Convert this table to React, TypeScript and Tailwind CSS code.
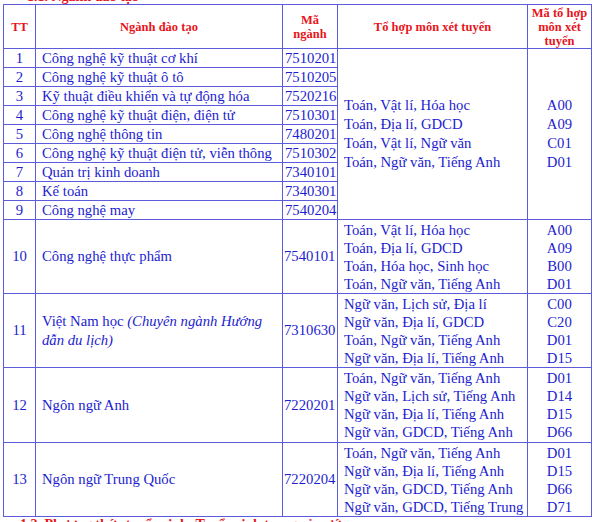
import React from "react";

const B = "border border-[#5b5bdb]";
const F = "font-['Liberation_Serif','Times_New_Roman',serif]";

const top9 = [
  ["1", "Công nghệ kỹ thuật cơ khí", "7510201"],
  ["2", "Công nghệ kỹ thuật ô tô", "7510205"],
  ["3", "Kỹ thuật điều khiển và tự động hóa", "7520216"],
  ["4", "Công nghệ kỹ thuật điện, điện tử", "7510301"],
  ["5", "Công nghệ thông tin", "7480201"],
  ["6", "Công nghệ kỹ thuật điện tử, viễn thông", "7510302"],
  ["7", "Quản trị kinh doanh", "7340101"],
  ["8", "Kế toán", "7340301"],
  ["9", "Công nghệ may", "7540204"],
];

const combo9: [string, string][] = [
  ["Toán, Vật lí, Hóa học", "A00"],
  ["Toán, Địa lí, GDCD", "A09"],
  ["Toán, Vật lí, Ngữ văn", "C01"],
  ["Toán, Ngữ văn, Tiếng Anh", "D01"],
];

type Big = {
  tt: string;
  name: React.ReactNode;
  code: string;
  combos: [string, string][];
  h: string;
};

const big: Big[] = [
  {
    tt: "10",
    name: "Công nghệ thực phẩm",
    code: "7540101",
    h: "h-[74px]",
    combos: [
      ["Toán, Vật lí, Hóa học", "A00"],
      ["Toán, Địa lí, GDCD", "A09"],
      ["Toán, Hóa học, Sinh học", "B00"],
      ["Toán, Ngữ văn, Tiếng Anh", "D01"],
    ],
  },
  {
    tt: "11",
    name: (
      <span className="block leading-[19px]">
        Việt Nam học <i>(Chuyên ngành Hướng</i>
        <br />
        <i>dẫn du lịch)</i>
      </span>
    ),
    code: "7310630",
    h: "h-[74px]",
    combos: [
      ["Ngữ văn, Lịch sử, Địa lí", "C00"],
      ["Ngữ văn, Địa lí, GDCD", "C20"],
      ["Toán, Ngữ văn, Tiếng Anh", "D01"],
      ["Ngữ văn, Địa lí, Tiếng Anh", "D15"],
    ],
  },
  {
    tt: "12",
    name: "Ngôn ngữ Anh",
    code: "7220201",
    h: "h-[75px]",
    combos: [
      ["Toán, Ngữ văn, Tiếng Anh", "D01"],
      ["Ngữ văn, Lịch sử, Tiếng Anh", "D14"],
      ["Ngữ văn, Địa lí, Tiếng Anh", "D15"],
      ["Ngữ văn, GDCD, Tiếng Anh", "D66"],
    ],
  },
  {
    tt: "13",
    name: "Ngôn ngữ Trung Quốc",
    code: "7220204",
    h: "h-[74px]",
    combos: [
      ["Toán, Ngữ văn, Tiếng Anh", "D01"],
      ["Ngữ văn, Địa lí, Tiếng Anh", "D15"],
      ["Ngữ văn, GDCD, Tiếng Anh", "D66"],
      ["Ngữ văn, GDCD, Tiếng Trung", "D71"],
    ],
  },
];

export default function App() {
  return (
    <div className={`w-[595px] h-[522px] overflow-hidden bg-white text-[#1c1cd0] ${F}`}>
      <div className="h-[4px] overflow-hidden relative">
        <div className={`absolute left-[27px] top-[-10px] text-[14px] leading-[14px] font-bold text-[#e8141b] whitespace-nowrap ${F}`}>
          1.1. Ngành đào tạo
        </div>
      </div>
      <div className="pl-[3px]">
        <table className={`table-fixed border-collapse w-[588px] text-[14.7px] text-[#1c1cd0] ${F}`}>
          <colgroup>
            <col className="w-[32px]" />
            <col className="w-[247px]" />
            <col className="w-[55px]" />
            <col className="w-[190px]" />
            <col className="w-[64px]" />
          </colgroup>
          <thead>
            <tr className={`h-[44px] text-[#e8141b] font-bold text-[12.5px] leading-[14px] ${F}`}>
              <th className={`${B} p-0 text-center align-middle`}>TT</th>
              <th className={`${B} p-0 text-center align-middle`}>Ngành đào tạo</th>
              <th className={`${B} p-0 text-center align-middle`}>
                Mã
                <br />
                ngành
              </th>
              <th className={`${B} p-0 text-center align-middle`}>Tổ hợp môn xét tuyển</th>
              <th className={`${B} p-0 text-center align-middle`}>
                Mã tổ hợp
                <br />
                môn xét
                <br />
                tuyển
              </th>
            </tr>
          </thead>
          <tbody>
            {top9.map((r, i) => (
              <tr key={r[0]} className="h-[19px] leading-[17px]">
                <td className={`${B} p-0 text-center align-middle`}>{r[0]}</td>
                <td className={`${B} p-0 pl-[6px] align-middle whitespace-nowrap`}>{r[1]}</td>
                <td className={`${B} p-0 pl-[2px] align-middle`}>{r[2]}</td>
                {i === 0 && (
                  <>
                    <td rowSpan={9} className={`${B} p-0 pl-[6px] align-middle leading-[19px]`}>
                      {combo9.map((c) => (
                        <div key={c[0]} className="whitespace-nowrap">{c[0]}</div>
                      ))}
                    </td>
                    <td rowSpan={9} className={`${B} p-0 text-center align-middle leading-[19px]`}>
                      {combo9.map((c) => (
                        <div key={c[1]}>{c[1]}</div>
                      ))}
                    </td>
                  </>
                )}
              </tr>
            ))}
            {big.map((r) => (
              <tr key={r.tt} className={r.h}>
                <td className={`${B} p-0 text-center align-middle`}>{r.tt}</td>
                <td className={`${B} p-0 pl-[6px] align-middle`}>{r.name}</td>
                <td className={`${B} p-0 pl-[1px] align-middle`}>{r.code}</td>
                <td className={`${B} p-0 pl-[6px] align-middle leading-[18px]`}>
                  {r.combos.map((c, k) => (
                    <div key={k} className="whitespace-nowrap">{c[0]}</div>
                  ))}
                </td>
                <td className={`${B} p-0 text-center align-middle leading-[18px]`}>
                  {r.combos.map((c, k) => (
                    <div key={k}>{c[1]}</div>
                  ))}
                </td>
              </tr>
            ))}
          </tbody>
        </table>
      </div>
      <div className={`pl-[20px] pt-[1px] text-[14px] leading-[14px] font-bold text-[#e8141b] whitespace-nowrap ${F}`}>
        1.2. Phương thức tuyển sinh: Tuyển sinh trong cả nước
      </div>
    </div>
  );
}
